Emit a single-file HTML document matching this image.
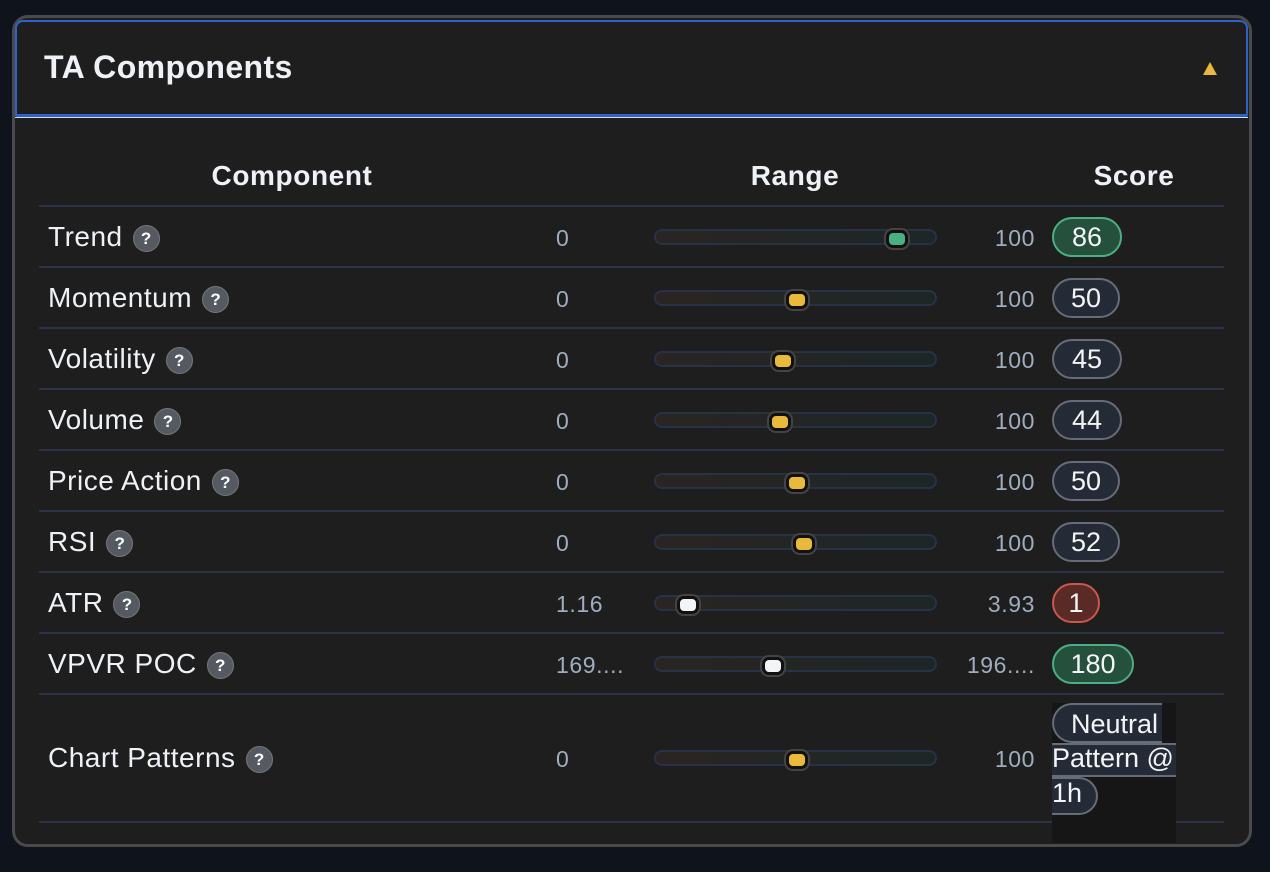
<!DOCTYPE html>
<html><head><style>
body{margin:0;width:1270px;height:872px;background:#0e131c;font-family:"Liberation Sans",Arial,sans-serif;position:relative;overflow:hidden}
.card{position:absolute;left:12px;top:15px;width:1234px;height:826px;border:3px solid #4a4a4a;border-radius:16px;background:#1e1e1e}
.hdr{position:absolute;left:15px;top:20px;width:1229px;height:92px;border:2px solid #2f62c9;border-bottom:3px solid #2f62c9;border-radius:8px 8px 2px 2px;background:#1e1e1e}
.hl{position:absolute;left:15px;top:117px;width:1233px;height:1px;background:#ddd}
.title{position:absolute;left:44px;top:49px;font-size:32px;font-weight:bold;color:#eef1f6;letter-spacing:0.4px}
.tri{position:absolute;left:1203px;top:62px;width:0;height:0;border-left:7px solid transparent;border-right:7px solid transparent;border-bottom:13px solid #e8b93b}
.th{position:absolute;top:160px;font-size:28px;font-weight:bold;color:#eef1f6;letter-spacing:0.6px;transform:translateX(-50%);white-space:nowrap}
.line{position:absolute;left:39px;width:1185px;height:2px;background:#2a3446}
.lab{position:absolute;left:48px;font-size:28px;color:#eef1f6;white-space:nowrap;letter-spacing:0.5px}
.q{display:inline-block;width:27px;height:27px;border-radius:50%;background:#555a62;border:1px solid #777;color:#fff;font-size:17px;font-weight:bold;text-align:center;line-height:26px;vertical-align:middle;margin-left:10px;box-sizing:border-box;letter-spacing:0}
.mn{position:absolute;left:556px;font-size:23px;color:#9fadbf;letter-spacing:0.6px}
.mx{position:absolute;right:235px;font-size:23px;color:#9fadbf;letter-spacing:0.6px}
.tr{position:absolute;left:654px;width:279px;height:12px;border:2px solid #263246;border-radius:8px;background:linear-gradient(90deg,#2a2522,#1d2626)}
.k{position:absolute;top:-1px;width:16px;height:12px;border-radius:7px;border:3px solid #111;box-shadow:0 0 0 2px #444;margin-left:-11px}
.b{position:absolute;left:1052px;height:36px;border:2px solid #666d78;border-radius:20px;background:#252b36;color:#f3f4f6;font-size:27px;line-height:36px;text-align:center}
</style></head><body>
<div class="card"></div>
<div class="hdr"></div><div class="hl"></div>
<div class="title">TA Components</div><div class="tri"></div>
<div class="th" style="left:292px">Component</div>
<div class="th" style="left:795px">Range</div>
<div class="th" style="left:1134px">Score</div>

<div class="line" style="top:205px"></div>
<div class="line" style="top:266px"></div>
<div class="line" style="top:327px"></div>
<div class="line" style="top:388px"></div>
<div class="line" style="top:449px"></div>
<div class="line" style="top:510px"></div>
<div class="line" style="top:571px"></div>
<div class="line" style="top:632px"></div>
<div class="line" style="top:693px"></div>
<div class="line" style="top:821px"></div>

<div class="lab" style="top:221px">Trend<span class="q">?</span></div>
<div class="mn" style="top:225px">0</div><div class="tr" style="top:229px"><div class="k" style="left:241px;background:#4caf84"></div></div><div class="mx" style="top:225px">100</div>
<div class="b" style="top:217px;width:66px;background:#25503c;border-color:#4caf84">86</div>

<div class="lab" style="top:282px">Momentum<span class="q">?</span></div>
<div class="mn" style="top:286px">0</div><div class="tr" style="top:290px"><div class="k" style="left:141px;background:#e8b93b"></div></div><div class="mx" style="top:286px">100</div>
<div class="b" style="top:278px;width:64px">50</div>

<div class="lab" style="top:343px">Volatility<span class="q">?</span></div>
<div class="mn" style="top:347px">0</div><div class="tr" style="top:351px"><div class="k" style="left:127px;background:#e8b93b"></div></div><div class="mx" style="top:347px">100</div>
<div class="b" style="top:339px;width:66px">45</div>

<div class="lab" style="top:404px">Volume<span class="q">?</span></div>
<div class="mn" style="top:408px">0</div><div class="tr" style="top:412px"><div class="k" style="left:124px;background:#e8b93b"></div></div><div class="mx" style="top:408px">100</div>
<div class="b" style="top:400px;width:66px">44</div>

<div class="lab" style="top:465px">Price Action<span class="q">?</span></div>
<div class="mn" style="top:469px">0</div><div class="tr" style="top:473px"><div class="k" style="left:141px;background:#e8b93b"></div></div><div class="mx" style="top:469px">100</div>
<div class="b" style="top:461px;width:64px">50</div>

<div class="lab" style="top:526px">RSI<span class="q">?</span></div>
<div class="mn" style="top:530px">0</div><div class="tr" style="top:534px"><div class="k" style="left:148px;background:#e8b93b"></div></div><div class="mx" style="top:530px">100</div>
<div class="b" style="top:522px;width:64px">52</div>

<div class="lab" style="top:587px">ATR<span class="q">?</span></div>
<div class="mn" style="top:591px">1.16</div><div class="tr" style="top:595px"><div class="k" style="left:32px;background:#f3f4f6"></div></div><div class="mx" style="top:591px">3.93</div>
<div class="b" style="top:583px;width:44px;background:#5a2a26;border-color:#c9574b">1</div>

<div class="lab" style="top:648px">VPVR POC<span class="q">?</span></div>
<div class="mn" style="top:652px">169....</div><div class="tr" style="top:656px"><div class="k" style="left:117px;background:#f3f4f6"></div></div><div class="mx" style="top:652px">196....</div>
<div class="b" style="top:644px;width:78px;background:#25503c;border-color:#4caf84">180</div>

<div class="lab" style="top:742px">Chart Patterns<span class="q">?</span></div>
<div class="mn" style="top:746px">0</div><div class="tr" style="top:750px"><div class="k" style="left:141px;background:#e8b93b"></div></div><div class="mx" style="top:746px">100</div>
<div style="position:absolute;left:1052px;top:703px;width:124px;height:140px;background:#161616"></div>
<div style="position:absolute;left:1052px;top:703px;width:110px;height:40px;border:2px solid #666d78;border-right:none;border-radius:20px 0 0 20px;background:#252b36;box-sizing:border-box"></div>
<div style="position:absolute;left:1052px;top:743px;width:124px;height:34px;border-top:2px solid #666d78;border-bottom:2px solid #666d78;background:#252b36;box-sizing:border-box"></div>
<div style="position:absolute;left:1052px;top:777px;width:46px;height:38px;border:2px solid #666d78;border-left:none;border-radius:0 20px 20px 0;background:#252b36;box-sizing:border-box"></div>
<div style="position:absolute;left:1071px;top:709px;font-size:27px;color:#f3f4f6">Neutral</div>
<div style="position:absolute;left:1052px;top:743px;font-size:27px;color:#f3f4f6">Pattern @</div>
<div style="position:absolute;left:1052px;top:778px;font-size:27px;color:#f3f4f6">1h</div>
</body></html>
